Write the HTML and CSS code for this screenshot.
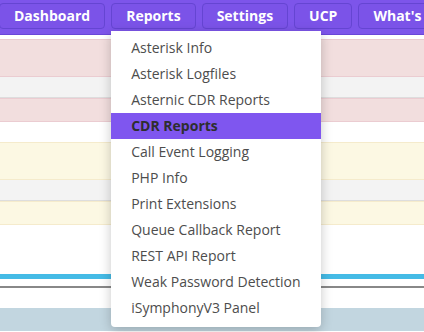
FILE: index.html
```html
<!DOCTYPE html>
<html>
	<head>
		<meta charset="UTF-8">
		<title>Reports</title>
		<link rel="stylesheet" href="styles.css">
	</head>
	<body>

		<!-- top menu -->
		<div class="topbar">
			<a class="btn" href="javascript:;">Dashboard</a>
			<div class="menu">
				<a class="btn open" href="javascript:;">Reports</a>
				<ul class="dropdown">
					<li>Asterisk Info</li>
					<li>Asterisk Logfiles</li>
					<li>Asternic CDR Reports</li>
					<li class="active">CDR Reports</li>
					<li>Call Event Logging</li>
					<li>PHP Info</li>
					<li>Print Extensions</li>
					<li>Queue Callback Report</li>
					<li>REST API Report</li>
					<li>Weak Password Detection</li>
					<li>iSymphonyV3 Panel</li>
				</ul>
			</div>
			<a class="btn" href="javascript:;">Settings</a>
			<a class="btn" href="javascript:;">UCP</a>
			<a class="btn" href="javascript:;">What's New</a>
		</div>

		<!-- page behind the menu -->
		<div class="page">
			<div class="row danger tall"></div>
			<div class="row muted"></div>
			<div class="row danger"></div>
			<div class="row blank"></div>
			<div class="row warning tall"></div>
			<div class="row muted"></div>
			<div class="row warning"></div>
			<div class="row empty"></div>
			<div class="bluebar"></div>
			<div class="rule"></div>
			<div class="footer"></div>
		</div>

	</body>
</html>
```

FILE: styles.css
```css
*{
	margin: 0;
	padding: 0;
	box-sizing: border-box;
}

body{
	width: 424px;
	height: 332px;
	overflow: hidden;
	background-color: #fff;
	font-family: "Open Sans", "Liberation Sans", sans-serif;
}

/*顶部菜单*/
.topbar{
	height: 35px;
	background-color: #7d55ea;
	border-bottom: 1px solid #6a46d8;
	display: flex;
	gap: 6px;
	padding-top: 3px;
	margin-left: -1px;
	white-space: nowrap;
	position: relative;
	z-index: 2;
}

.btn{
	display: block;
	height: 26px;
	line-height: 24px;
	padding: 0 14px;
	color: #fff;
	font-size: 14px;
	font-weight: bold;
	text-decoration: none;
	background-color: #7b53e8;
	border: 1px solid #6545d2;
	border-radius: 4px;
}

.menu{
	position: relative;
}

/*下拉菜单*/
.dropdown{
	list-style: none;
	position: absolute;
	top: 28px;
	left: 0;
	width: 210px;
	padding: 4px 0 6px;
	background-color: #fff;
	border-radius: 0 0 4px 4px;
	box-shadow: 0 3px 12px rgba(0,0,0,0.22);
}

.dropdown li{
	height: 26px;
	line-height: 26px;
	padding-left: 20px;
	font-size: 14px;
	color: #4d4d4d;
}

.dropdown li.active{
	background-color: #7f56ef;
	color: #2e2e2e;
	font-weight: bold;
}

/*后面的页面*/
.page{
	padding-top: 4px;
}

.row{
	height: 21px;
}

.danger{
	height: 24px;
	background-color: #f2dede;
	border-top: 1px solid #ebccd1;
	border-bottom: 1px solid #ebccd1;
}

.warning{
	height: 24px;
	background-color: #fcf8e3;
	border-top: 1px solid #f5ebcc;
	border-bottom: 1px solid #f5ebcc;
}

.tall{
	height: 38px;
}

.muted{
	background-color: #f3f3f3;
	border-bottom: 1px solid #ddd;
}

.blank{
	height: 20px;
}

.empty{
	height: 49px;
}

.bluebar{
	height: 5px;
	background-color: #45bbe6;
}

.rule{
	height: 9px;
	border-bottom: 2px solid #888;
}

.footer{
	height: 43px;
	border-top: 20px solid #fff;
	background-color: #c2d6e0;
}
```
